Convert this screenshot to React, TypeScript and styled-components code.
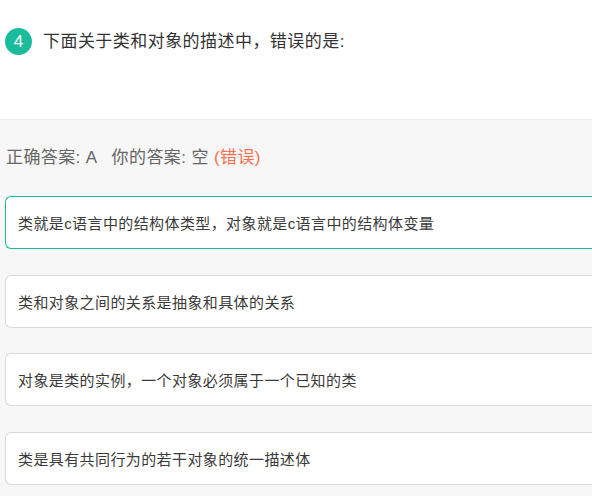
import styled, { createGlobalStyle } from "styled-components";

const GlobalStyle = createGlobalStyle`
  html, body {
    margin: 0;
    padding: 0;
    background: #f7f7f7;
  }
  body {
    font-family: "Liberation Sans", "Noto Sans CJK SC", sans-serif;
  }
`;

const options = [
  { text: "类就是c语言中的结构体类型，对象就是c语言中的结构体变量", correct: true },
  { text: "类和对象之间的关系是抽象和具体的关系", correct: false },
  { text: "对象是类的实例，一个对象必须属于一个已知的类", correct: false },
  { text: "类是具有共同行为的若干对象的统一描述体", correct: false },
];

export default function App() {
  return (
    <Page>
      <GlobalStyle />
      <Header>
        <Badge>4</Badge>
        <Question>下面关于类和对象的描述中，错误的是:</Question>
      </Header>
      <Body>
        <AnswerLine>
          <Gap>正确答案: A</Gap>
          你的答案: 空 <Wrong>(错误)</Wrong>
        </AnswerLine>
        <OptionList>
          {options.map((o) => (
            <Option key={o.text} $correct={o.correct}>
              {o.text}
            </Option>
          ))}
        </OptionList>
      </Body>
    </Page>
  );
}

const Page = styled.div`
  width: 592px;
  min-height: 496px;
  background: #f7f7f7;
`;

const Header = styled.div`
  box-sizing: border-box;
  height: 120px;
  padding: 28px 5px 0 5px;
  background: #fff;
  border-bottom: 1px solid #ebebeb;
  display: flex;
  align-items: flex-start;
  gap: 11px;
`;

const Badge = styled.div`
  width: 27px;
  height: 27px;
  flex-shrink: 0;
  border-radius: 50%;
  background: #1bbc9b;
  color: #fff;
  font-size: 17px;
  display: flex;
  align-items: center;
  justify-content: center;
`;

const Question = styled.div`
  font-size: 17px;
  line-height: 27px;
  letter-spacing: 0.45px;
  color: #333;
`;

const Body = styled.div`
  padding: 28px 0 0 5px;
`;

const AnswerLine = styled.div`
  font-size: 17px;
  line-height: 20px;
  letter-spacing: 0.4px;
  color: #666;
  padding-left: 1px;
`;

const Gap = styled.span`
  margin-right: 14px;
`;

const Wrong = styled.span`
  color: #ff6f4f;
`;

const OptionList = styled.div`
  margin-top: 28px;
  display: flex;
  flex-direction: column;
  gap: 25.5px;
`;

const Option = styled.div<{ $correct: boolean }>`
  box-sizing: border-box;
  height: 53px;
  padding: 0 12px;
  display: flex;
  align-items: center;
  background: #fff;
  border: 1px solid ${(p) => (p.$correct ? "#1bbc9b" : "#dadada")};
  border-right: none;
  border-radius: 6px 0 0 6px;
  font-size: 15px;
  letter-spacing: 0.4px;
  color: #3a3a3a;
`;
